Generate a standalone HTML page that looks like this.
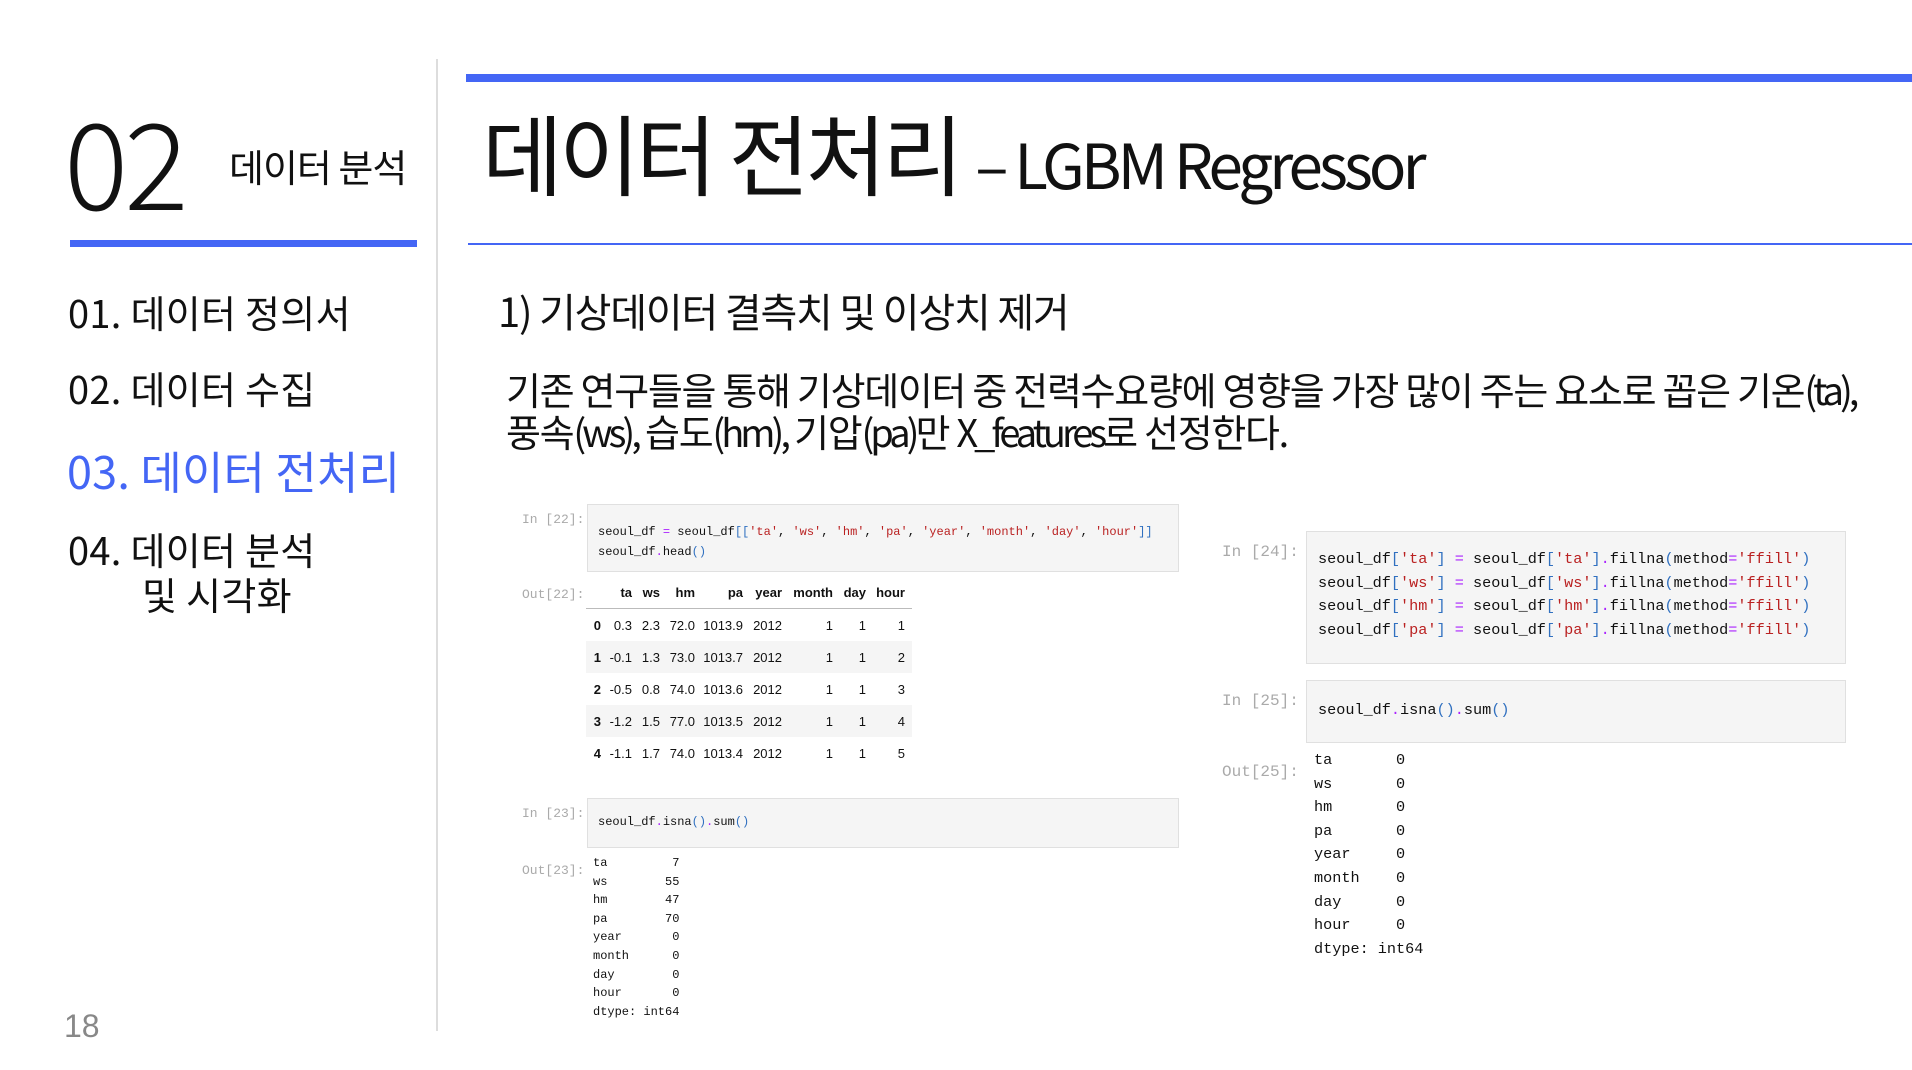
<!DOCTYPE html>
<html><head><meta charset="utf-8">
<style>
*{margin:0;padding:0;box-sizing:border-box}
body{width:1912px;height:1070px;background:#fff;position:relative;overflow:hidden;font-family:"Liberation Sans","Noto Sans CJK KR",sans-serif;color:#111}
.a{position:absolute;white-space:nowrap}
.k{font-family:"Noto Sans CJK KR","Liberation Sans",sans-serif}
.m{font-family:"Liberation Mono","DejaVu Sans Mono",monospace}
.blue{color:#4466f5}
.box{position:absolute;background:#f5f5f5;border:1px solid #e0e0e0}
.lab{position:absolute;color:#aaa;font-family:"Liberation Mono",monospace;font-size:13px}
.s{color:#ba2121}.o{color:#aa22ff}.p{color:#3070c0}
.tb{position:absolute;font-family:"Liberation Sans",sans-serif;font-size:13px;color:#111}
.tb div{position:absolute;text-align:right}
.l{letter-spacing:-4px}
</style></head><body>
<div class="a" style="left:436px;top:59px;width:2px;height:972px;background:#ddd"></div>
<div class="a k" style="left:64px;top:88px;font-size:120px;line-height:140px;font-weight:300;letter-spacing:-4px">02</div>
<div class="a k" style="left:229px;top:140px;font-size:38px;line-height:52px;letter-spacing:-1px">데이터 분석</div>
<div class="a" style="left:70px;top:240px;width:347px;height:7px;background:#4466f5"></div>
<div class="a k" style="left:68px;top:286px;font-size:38px;line-height:52px;letter-spacing:0.3px">01. 데이터 정의서</div>
<div class="a k" style="left:68px;top:362px;font-size:38px;line-height:52px;letter-spacing:0.3px">02. 데이터 수집</div>
<div class="a k blue" style="left:67px;top:440px;font-size:45px;line-height:60px;letter-spacing:0.2px">03. 데이터 전처리</div>
<div class="a k" style="left:68px;top:523px;font-size:38px;line-height:52px;letter-spacing:0.3px">04. 데이터 분석</div>
<div class="a k" style="left:142px;top:568px;font-size:38px;line-height:52px;letter-spacing:0.3px">및 시각화</div>
<div class="a" style="left:64px;top:1006px;font-size:32px;line-height:40px;color:#888">18</div>

<div class="a" style="left:466px;top:74px;width:1446px;height:8px;background:#4466f5"></div>
<div class="a" style="left:468px;top:243px;width:1444px;height:2px;background:#4466f5"></div>
<div class="a k" style="left:482px;top:94px;font-size:88px;line-height:116px;letter-spacing:-4px">데이터 전처리 <span style="font-size:62px;letter-spacing:-4px">– LGBM Regressor</span></div>

<div class="a k" style="left:498px;top:282px;font-size:40px;line-height:56px;letter-spacing:-1.2px">1) 기상데이터 결측치 및 이상치 제거</div>
<div class="a k" style="left:506px;top:368px;font-size:38px;line-height:42px;letter-spacing:-1.3px">기존 연구들을 통해 기상데이터 중 전력수요량에 영향을 가장 많이 주는 요소로 꼽은 기온<span class="l">(ta),</span><br>풍속<span class="l">(ws),</span> 습도<span class="l">(hm),</span> 기압<span class="l">(pa)</span>만 <span class="l">X_features</span>로 선정한다.</div>

<div class="lab" style="left:522px;top:512px">In [22]:</div>
<div class="box" style="left:587px;top:504px;width:592px;height:68px"></div>
<div class="a m" style="left:598px;top:522px;font-size:12px;line-height:20px">seoul_df <span class="o">=</span> seoul_df<span class="p">[[</span><span class="s">'ta'</span>, <span class="s">'ws'</span>, <span class="s">'hm'</span>, <span class="s">'pa'</span>, <span class="s">'year'</span>, <span class="s">'month'</span>, <span class="s">'day'</span>, <span class="s">'hour'</span><span class="p">]]</span><br>seoul_df<span class="o">.</span>head<span class="p">()</span></div>

<div class="lab" style="left:522px;top:587px">Out[22]:</div>
<div class="a" style="left:586px;top:641px;width:326px;height:32px;background:#f5f5f5"></div>
<div class="a" style="left:586px;top:705px;width:326px;height:32px;background:#f5f5f5"></div>
<div class="a" style="left:586px;top:608px;width:326px;height:1px;background:#bbb"></div>
<div class="tb">
<div style="top:585px;left:600px;width:32px;font-weight:bold">ta</div>
<div style="top:585px;left:630px;width:30px;font-weight:bold">ws</div>
<div style="top:585px;left:660px;width:35px;font-weight:bold">hm</div>
<div style="top:585px;left:700px;width:43px;font-weight:bold">pa</div>
<div style="top:585px;left:745px;width:37px;font-weight:bold">year</div>
<div style="top:585px;left:785px;width:48px;font-weight:bold">month</div>
<div style="top:585px;left:836px;width:30px;font-weight:bold">day</div>
<div style="top:585px;left:866px;width:39px;font-weight:bold">hour</div>
</div>
<div class="tb">
<div style="top:618px;left:588px;width:13px;font-weight:bold">0</div><div style="top:618px;left:600px;width:32px">0.3</div><div style="top:618px;left:630px;width:30px">2.3</div><div style="top:618px;left:660px;width:35px">72.0</div><div style="top:618px;left:700px;width:43px">1013.9</div><div style="top:618px;left:745px;width:37px">2012</div><div style="top:618px;left:785px;width:48px">1</div><div style="top:618px;left:836px;width:30px">1</div><div style="top:618px;left:866px;width:39px">1</div>
<div style="top:650px;left:588px;width:13px;font-weight:bold">1</div><div style="top:650px;left:600px;width:32px">-0.1</div><div style="top:650px;left:630px;width:30px">1.3</div><div style="top:650px;left:660px;width:35px">73.0</div><div style="top:650px;left:700px;width:43px">1013.7</div><div style="top:650px;left:745px;width:37px">2012</div><div style="top:650px;left:785px;width:48px">1</div><div style="top:650px;left:836px;width:30px">1</div><div style="top:650px;left:866px;width:39px">2</div>
<div style="top:682px;left:588px;width:13px;font-weight:bold">2</div><div style="top:682px;left:600px;width:32px">-0.5</div><div style="top:682px;left:630px;width:30px">0.8</div><div style="top:682px;left:660px;width:35px">74.0</div><div style="top:682px;left:700px;width:43px">1013.6</div><div style="top:682px;left:745px;width:37px">2012</div><div style="top:682px;left:785px;width:48px">1</div><div style="top:682px;left:836px;width:30px">1</div><div style="top:682px;left:866px;width:39px">3</div>
<div style="top:714px;left:588px;width:13px;font-weight:bold">3</div><div style="top:714px;left:600px;width:32px">-1.2</div><div style="top:714px;left:630px;width:30px">1.5</div><div style="top:714px;left:660px;width:35px">77.0</div><div style="top:714px;left:700px;width:43px">1013.5</div><div style="top:714px;left:745px;width:37px">2012</div><div style="top:714px;left:785px;width:48px">1</div><div style="top:714px;left:836px;width:30px">1</div><div style="top:714px;left:866px;width:39px">4</div>
<div style="top:746px;left:588px;width:13px;font-weight:bold">4</div><div style="top:746px;left:600px;width:32px">-1.1</div><div style="top:746px;left:630px;width:30px">1.7</div><div style="top:746px;left:660px;width:35px">74.0</div><div style="top:746px;left:700px;width:43px">1013.4</div><div style="top:746px;left:745px;width:37px">2012</div><div style="top:746px;left:785px;width:48px">1</div><div style="top:746px;left:836px;width:30px">1</div><div style="top:746px;left:866px;width:39px">5</div>
</div>

<div class="lab" style="left:522px;top:806px">In [23]:</div>
<div class="box" style="left:587px;top:798px;width:592px;height:50px"></div>
<div class="a m" style="left:598px;top:812px;font-size:12px;line-height:20px">seoul_df<span class="o">.</span>isna<span class="p">()</span><span class="o">.</span>sum<span class="p">()</span></div>
<div class="lab" style="left:522px;top:863px">Out[23]:</div>
<div class="a m" style="left:593px;top:854px;font-size:12px;line-height:18.6px;white-space:pre">ta         7
ws        55
hm        47
pa        70
year       0
month      0
day        0
hour       0
dtype: int64</div>

<div class="lab" style="left:1222px;top:543px;font-size:16px">In [24]:</div>
<div class="box" style="left:1306px;top:531px;width:540px;height:133px"></div>
<div class="a m" style="left:1318px;top:548px;font-size:15.2px;line-height:23.6px">seoul_df<span class="p">[</span><span class="s">'ta'</span><span class="p">]</span> <span class="o">=</span> seoul_df<span class="p">[</span><span class="s">'ta'</span><span class="p">]</span><span class="o">.</span>fillna<span class="p">(</span>method<span class="o">=</span><span class="s">'ffill'</span><span class="p">)</span><br>seoul_df<span class="p">[</span><span class="s">'ws'</span><span class="p">]</span> <span class="o">=</span> seoul_df<span class="p">[</span><span class="s">'ws'</span><span class="p">]</span><span class="o">.</span>fillna<span class="p">(</span>method<span class="o">=</span><span class="s">'ffill'</span><span class="p">)</span><br>seoul_df<span class="p">[</span><span class="s">'hm'</span><span class="p">]</span> <span class="o">=</span> seoul_df<span class="p">[</span><span class="s">'hm'</span><span class="p">]</span><span class="o">.</span>fillna<span class="p">(</span>method<span class="o">=</span><span class="s">'ffill'</span><span class="p">)</span><br>seoul_df<span class="p">[</span><span class="s">'pa'</span><span class="p">]</span> <span class="o">=</span> seoul_df<span class="p">[</span><span class="s">'pa'</span><span class="p">]</span><span class="o">.</span>fillna<span class="p">(</span>method<span class="o">=</span><span class="s">'ffill'</span><span class="p">)</span></div>

<div class="lab" style="left:1222px;top:692px;font-size:16px">In [25]:</div>
<div class="box" style="left:1306px;top:680px;width:540px;height:63px"></div>
<div class="a m" style="left:1318px;top:699px;font-size:15.2px;line-height:23.6px">seoul_df<span class="o">.</span>isna<span class="p">()</span><span class="o">.</span>sum<span class="p">()</span></div>
<div class="lab" style="left:1222px;top:763px;font-size:16px">Out[25]:</div>
<div class="a m" style="left:1314px;top:749px;font-size:15.2px;line-height:23.6px;white-space:pre">ta       0
ws       0
hm       0
pa       0
year     0
month    0
day      0
hour     0
dtype: int64</div>
</body></html>
